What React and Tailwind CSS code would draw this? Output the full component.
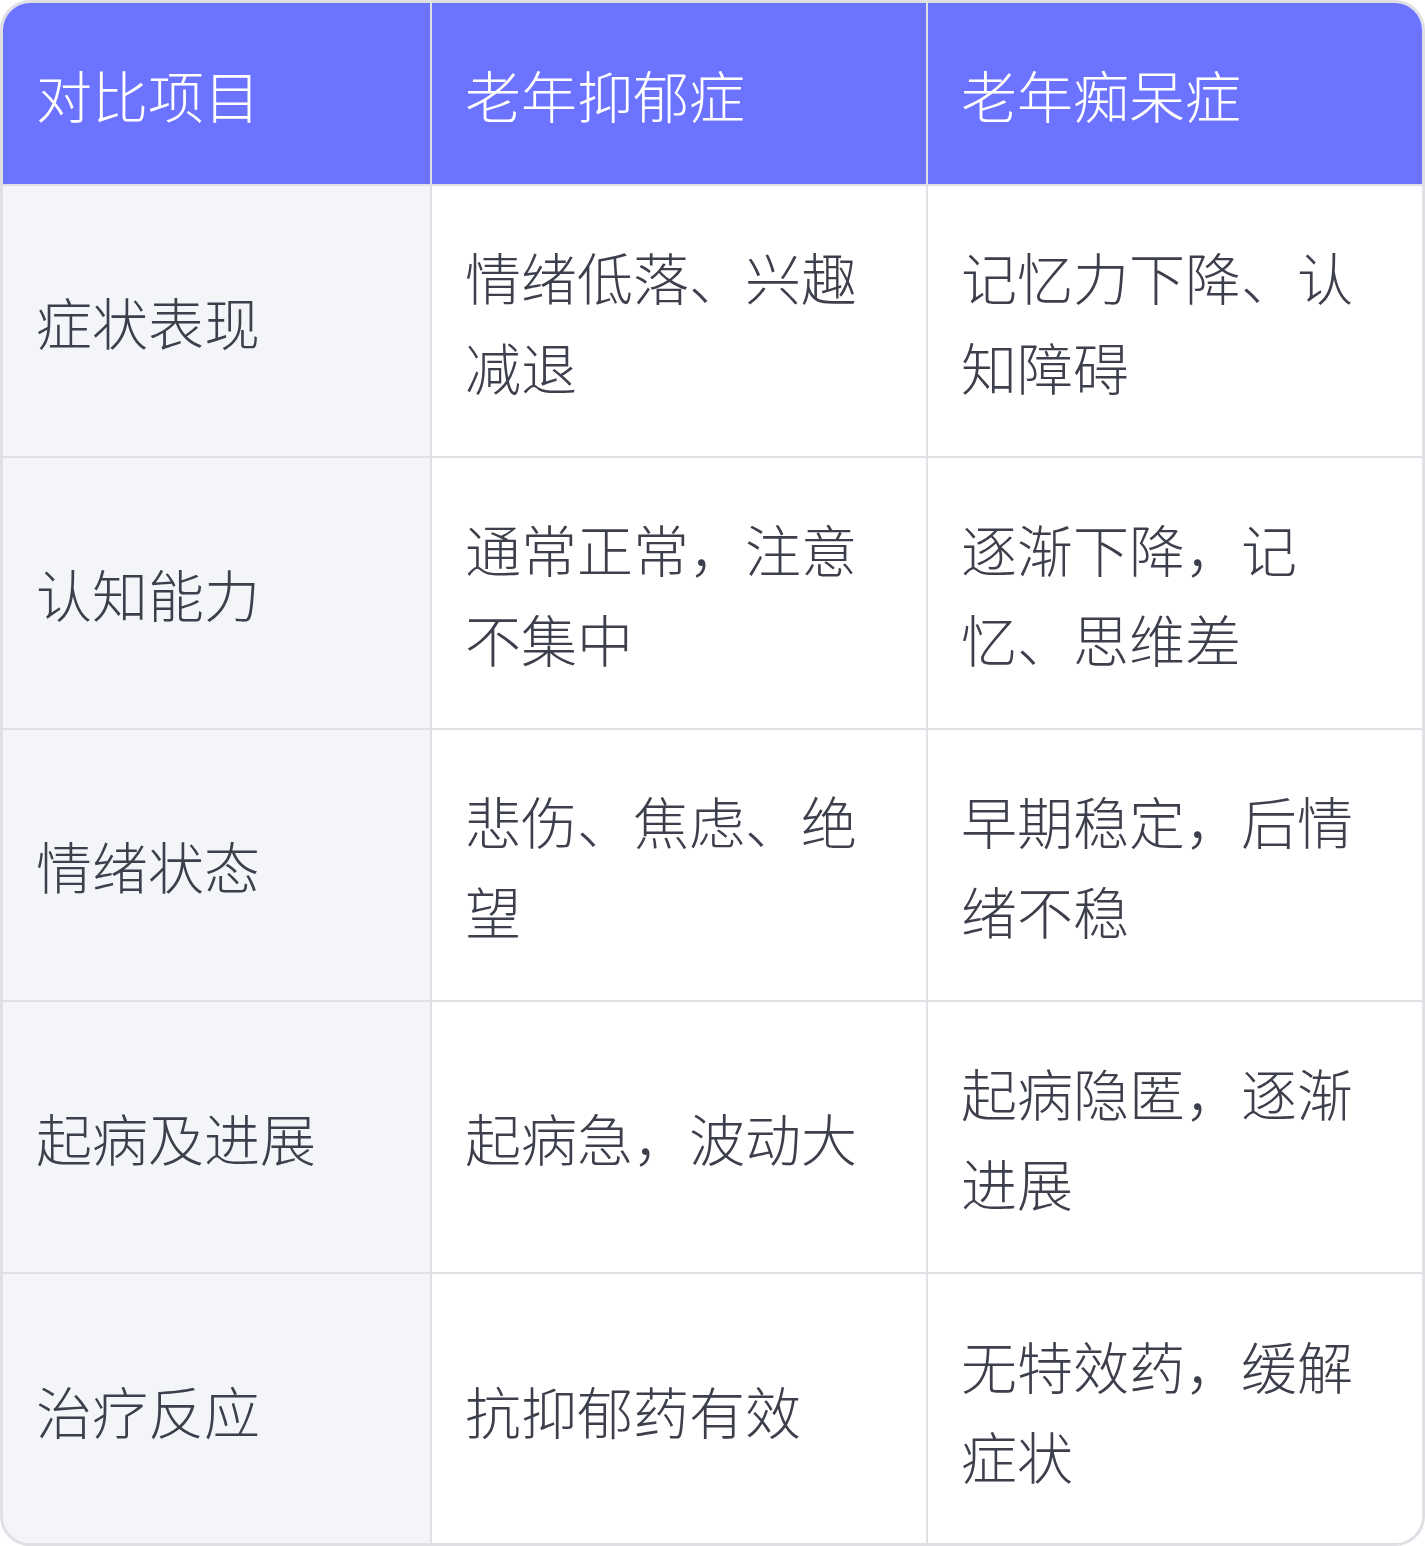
import React from "react";

const rows = [
  ["症状表现", "情绪低落、兴趣减退", "记忆力下降、认知障碍"],
  ["认知能力", "通常正常，注意不集中", "逐渐下降，记忆、思维差"],
  ["情绪状态", "悲伤、焦虑、绝望", "早期稳定，后情绪不稳"],
  ["起病及进展", "起病急，波动大", "起病隐匿，逐渐进展"],
  ["治疗反应", "抗抑郁药有效", "无特效药，缓解症状"],
];

export default function App() {
  return (
    <div
      className="w-[1425px] h-[1546px] bg-white"
      style={{ fontFamily: '"Noto Sans CJK SC", "Noto Sans", sans-serif' }}
    >
      <div className="w-full h-full border-[3px] border-[#dfe0e5] rounded-[30px] overflow-hidden">
        <table className="w-full border-collapse table-fixed">
          <colgroup>
            <col className="w-[428px]" />
            <col className="w-[496px]" />
            <col />
          </colgroup>
          <thead>
            <tr className="bg-[#6c73ff] h-[182px]">
              {["对比项目", "老年抑郁症", "老年痴呆症"].map((t, i) => (
                <th
                  key={i}
                  className={`text-left align-middle font-light text-white text-[56px] leading-[90px] pl-[33px] pr-[33px] border-b-2 border-[#dfe0e5] ${
                    i < 2 ? "border-r-2" : ""
                  }`}
                >
                  {t}
                </th>
              ))}
            </tr>
          </thead>
          <tbody>
            {rows.map((r, ri) => (
              <tr key={ri} className="h-[272px]">
                {r.map((t, i) => (
                  <td
                    key={i}
                    className={`align-middle font-light text-[#3d404c] text-[56px] leading-[90px] pl-[33px] pr-[33px] py-[45px] ${
                      i === 0 ? "bg-[#f4f5f9]" : "bg-white"
                    } ${i < 2 ? "border-r-2 border-[#dfe0e5]" : ""} ${
                      ri < rows.length - 1 ? "border-b-2 border-[#dfe0e5]" : ""
                    }`}
                  >
                    {t}
                  </td>
                ))}
              </tr>
            ))}
          </tbody>
        </table>
      </div>
    </div>
  );
}
